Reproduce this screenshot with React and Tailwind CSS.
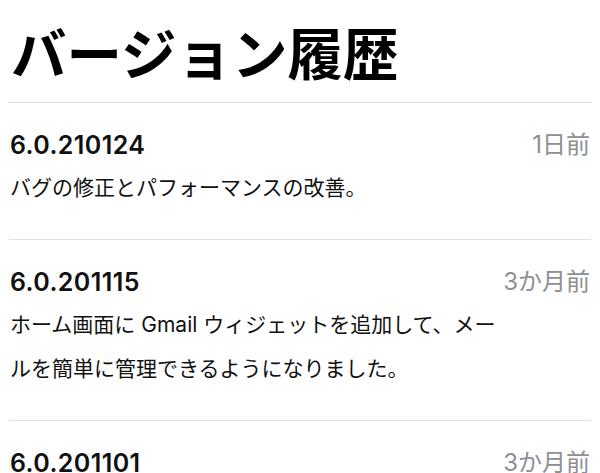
import React from "react";

const entries = [
  {
    version: "6.0.210124",
    time: "1日前",
    body: "バグの修正とパフォーマンスの改善。",
  },
  {
    version: "6.0.201115",
    time: "3か月前",
    body: "ホーム画面に Gmail ウィジェットを追加して、メールを簡単に管理できるようになりました。",
  },
  {
    version: "6.0.201101",
    time: "3か月前",
    body: "",
  },
];

export default function App() {
  return (
    <div
      className="w-[600px] h-[473px] overflow-hidden bg-white text-black"
      style={{ fontFamily: 'Inter, "Noto Sans CJK JP", sans-serif' }}
    >
      <h1 className="px-[11px] pt-[25px] h-[102px] text-[55.5px] leading-[60px] font-bold">
        バージョン履歴
      </h1>
      <div className="mx-[9px] h-px bg-[#dcdcdc]" />
      {entries.map((e, i) => (
        <div key={i}>
          <div className="px-[10px] pt-[27px] pb-[29px]">
            <div className="flex items-center justify-between h-[30px]">
              <span className="text-[25px] font-semibold leading-[30px] tracking-[0.4px] text-[#111]">
                {e.version}
              </span>
              <span className="text-[24px] leading-[30px] text-[#8e8e93]">
                {e.time}
              </span>
            </div>
            {e.body && (
              <p className="mt-[6px] w-[506px] text-[21px] leading-[44px] text-[#111]">
                {e.body}
              </p>
            )}
          </div>
          {e.body && <div className="mx-[9px] h-px bg-[#e0e0e0]" />}
        </div>
      ))}
    </div>
  );
}
